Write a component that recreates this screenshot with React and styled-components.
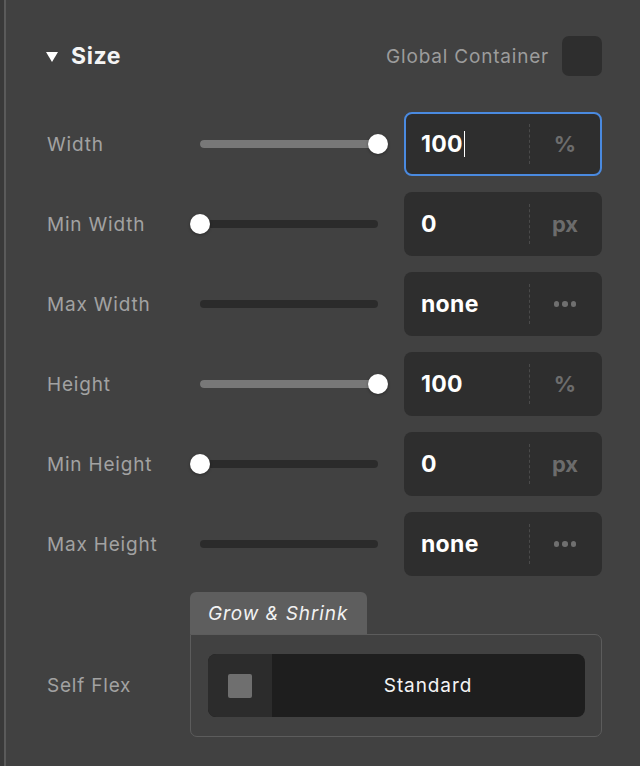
import React from "react";
import styled, { createGlobalStyle } from "styled-components";

const Global = createGlobalStyle`
  html, body { margin: 0; padding: 0; background: #414141; }
  body { font-family: Inter, "Noto Sans", "Liberation Sans", sans-serif; -webkit-font-smoothing: antialiased; }
  * { box-sizing: border-box; }
`;

const Frame = styled.div`
  width: 640px;
  height: 766px;
  background: #414141;
  border-left: 4px solid #393939;
  overflow: hidden;
`;

const Panel = styled.div`
  height: 100%;
  border-left: 2px solid #5a5a5a;
  padding: 36px 38px 0 40px;
  display: flex;
  flex-direction: column;
  gap: 16px;
`;

const Header = styled.div`
  display: flex;
  align-items: center;
  height: 40px;
  margin-bottom: 20px;
`;

const Caret = styled.span`
  width: 0;
  height: 0;
  border-left: 6.5px solid transparent;
  border-right: 6.5px solid transparent;
  border-top: 10px solid #ffffff;
  margin-right: 13px;
  margin-top: 1px;
`;

const Title = styled.h2`
  margin: 0;
  font-size: 23px;
  font-weight: 700;
  color: #f4f4f4;
  letter-spacing: 0.6px;
`;

const GlobalLabel = styled.span`
  margin-left: auto;
  font-size: 19px;
  color: #9c9c9c;
  letter-spacing: 0.8px;
  margin-right: 13px;
`;

const CheckBox = styled.span`
  width: 40px;
  height: 40px;
  border-radius: 7px;
  background: #2e2e2e;
`;

const Row = styled.div`
  display: flex;
  align-items: center;
  height: 64px;
`;

const Label = styled.span`
  width: ${(p) => p.$w || 154}px;
  flex: none;
  padding-left: 1px;
  font-size: 19px;
  color: #a2a2a2;
  letter-spacing: 0.8px;
`;

const FlexLabel = styled(Label)`
  align-self: flex-end;
  height: 102px;
  display: flex;
  align-items: center;
`;

const Track = styled.div`
  position: relative;
  width: 178px;
  height: 8px;
  border-radius: 4px;
  background: #2b2b2b;
`;

const Fill = styled.div`
  height: 100%;
  border-radius: 4px;
  background: #787878;
`;

const Thumb = styled.span`
  position: absolute;
  top: 50%;
  width: 20px;
  height: 20px;
  margin: -10px 0 0 -10px;
  border-radius: 50%;
  background: #ffffff;
  box-shadow: 0 1px 3px rgba(0, 0, 0, 0.35);
`;

const Field = styled.div`
  margin-left: auto;
  width: 198px;
  height: 64px;
  border-radius: 8px;
  background: #2e2e2e;
  border: 2px solid ${(p) => (p.$focused ? "#4a8ae0" : "transparent")};
  display: flex;
  align-items: center;
`;

const Value = styled.div`
  width: 123px;
  padding-left: 15px;
  display: flex;
  align-items: center;
  font-size: 23px;
  font-weight: 700;
  color: #ffffff;
  letter-spacing: 0.3px;
`;

const Caret2 = styled.span`
  width: 1.5px;
  height: 26px;
  background: #ffffff;
  margin-left: 1px;
`;

const Divider = styled.span`
  width: 0;
  height: 40px;
  border-left: 1.5px dashed #4a4a4a;
`;

const Unit = styled.div`
  flex: 1;
  display: flex;
  align-items: center;
  justify-content: center;
  gap: 3px;
  font-size: 22px;
  font-weight: 700;
  color: #6c6c6c;
`;

const Dot = styled.span`
  width: 5.5px;
  height: 5.5px;
  border-radius: 50%;
  background: #6f6f6f;
`;

const FlexRow = styled.div`
  display: flex;
`;

const FlexGroup = styled.div`
  display: flex;
  flex-direction: column;
  width: 412px;
`;

const Tab = styled.div`
  align-self: flex-start;
  width: 177px;
  height: 42px;
  border-radius: 6px 6px 0 0;
  background: #5e5e5e;
  display: flex;
  align-items: center;
  padding-left: 18px;
  font-size: 19px;
  font-style: italic;
  color: #f2f2f2;
  letter-spacing: 0.9px;
`;

const Box = styled.div`
  border: 1.5px solid #5c5c5c;
  border-radius: 0 7px 7px 7px;
  padding: 19px 16.5px 18.5px;
`;

const Segmented = styled.div`
  display: flex;
  height: 63px;
  border-radius: 8px;
  overflow: hidden;
  background: #1e1e1e;
`;

const SegIcon = styled.div`
  width: 64px;
  background: #2c2c2c;
  display: flex;
  align-items: center;
  justify-content: center;
`;

const Square = styled.span`
  width: 24px;
  height: 24px;
  border-radius: 2px;
  background: #6f6f6f;
`;

const SegLabel = styled.div`
  flex: 1;
  display: flex;
  align-items: center;
  justify-content: center;
  font-size: 19px;
  color: #f4f4f4;
  letter-spacing: 0.9px;
`;

const rows = [
  { label: "Width", pct: 1, value: "100", unit: "%", focused: true },
  { label: "Min Width", pct: 0, value: "0", unit: "px" },
  { label: "Max Width", pct: null, value: "none", unit: "dots" },
  { label: "Height", pct: 1, value: "100", unit: "%" },
  { label: "Min Height", pct: 0, value: "0", unit: "px" },
  { label: "Max Height", pct: null, value: "none", unit: "dots" },
];

function Slider({ pct }) {
  return (
    <Track>
      {pct !== null && <Fill style={{ width: `${pct * 100}%` }} />}
      {pct !== null && <Thumb style={{ left: `${pct * 100}%` }} />}
    </Track>
  );
}

export default function App() {
  return (
    <>
      <Global />
      <Frame>
        <Panel>
          <Header>
            <Caret />
            <Title>Size</Title>
            <GlobalLabel>Global Container</GlobalLabel>
            <CheckBox />
          </Header>
          {rows.map((r) => (
            <Row key={r.label}>
              <Label>{r.label}</Label>
              <Slider pct={r.pct} />
              <Field $focused={r.focused}>
                <Value>
                  {r.value}
                  {r.focused && <Caret2 />}
                </Value>
                <Divider />
                <Unit>
                  {r.unit === "dots" ? (
                    <>
                      <Dot />
                      <Dot />
                      <Dot />
                    </>
                  ) : (
                    r.unit
                  )}
                </Unit>
              </Field>
            </Row>
          ))}
          <FlexRow>
            <FlexLabel $w={144}>Self Flex</FlexLabel>
            <FlexGroup>
              <Tab>Grow &amp; Shrink</Tab>
              <Box>
                <Segmented>
                  <SegIcon>
                    <Square />
                  </SegIcon>
                  <SegLabel>Standard</SegLabel>
                </Segmented>
              </Box>
            </FlexGroup>
          </FlexRow>
        </Panel>
      </Frame>
    </>
  );
}
